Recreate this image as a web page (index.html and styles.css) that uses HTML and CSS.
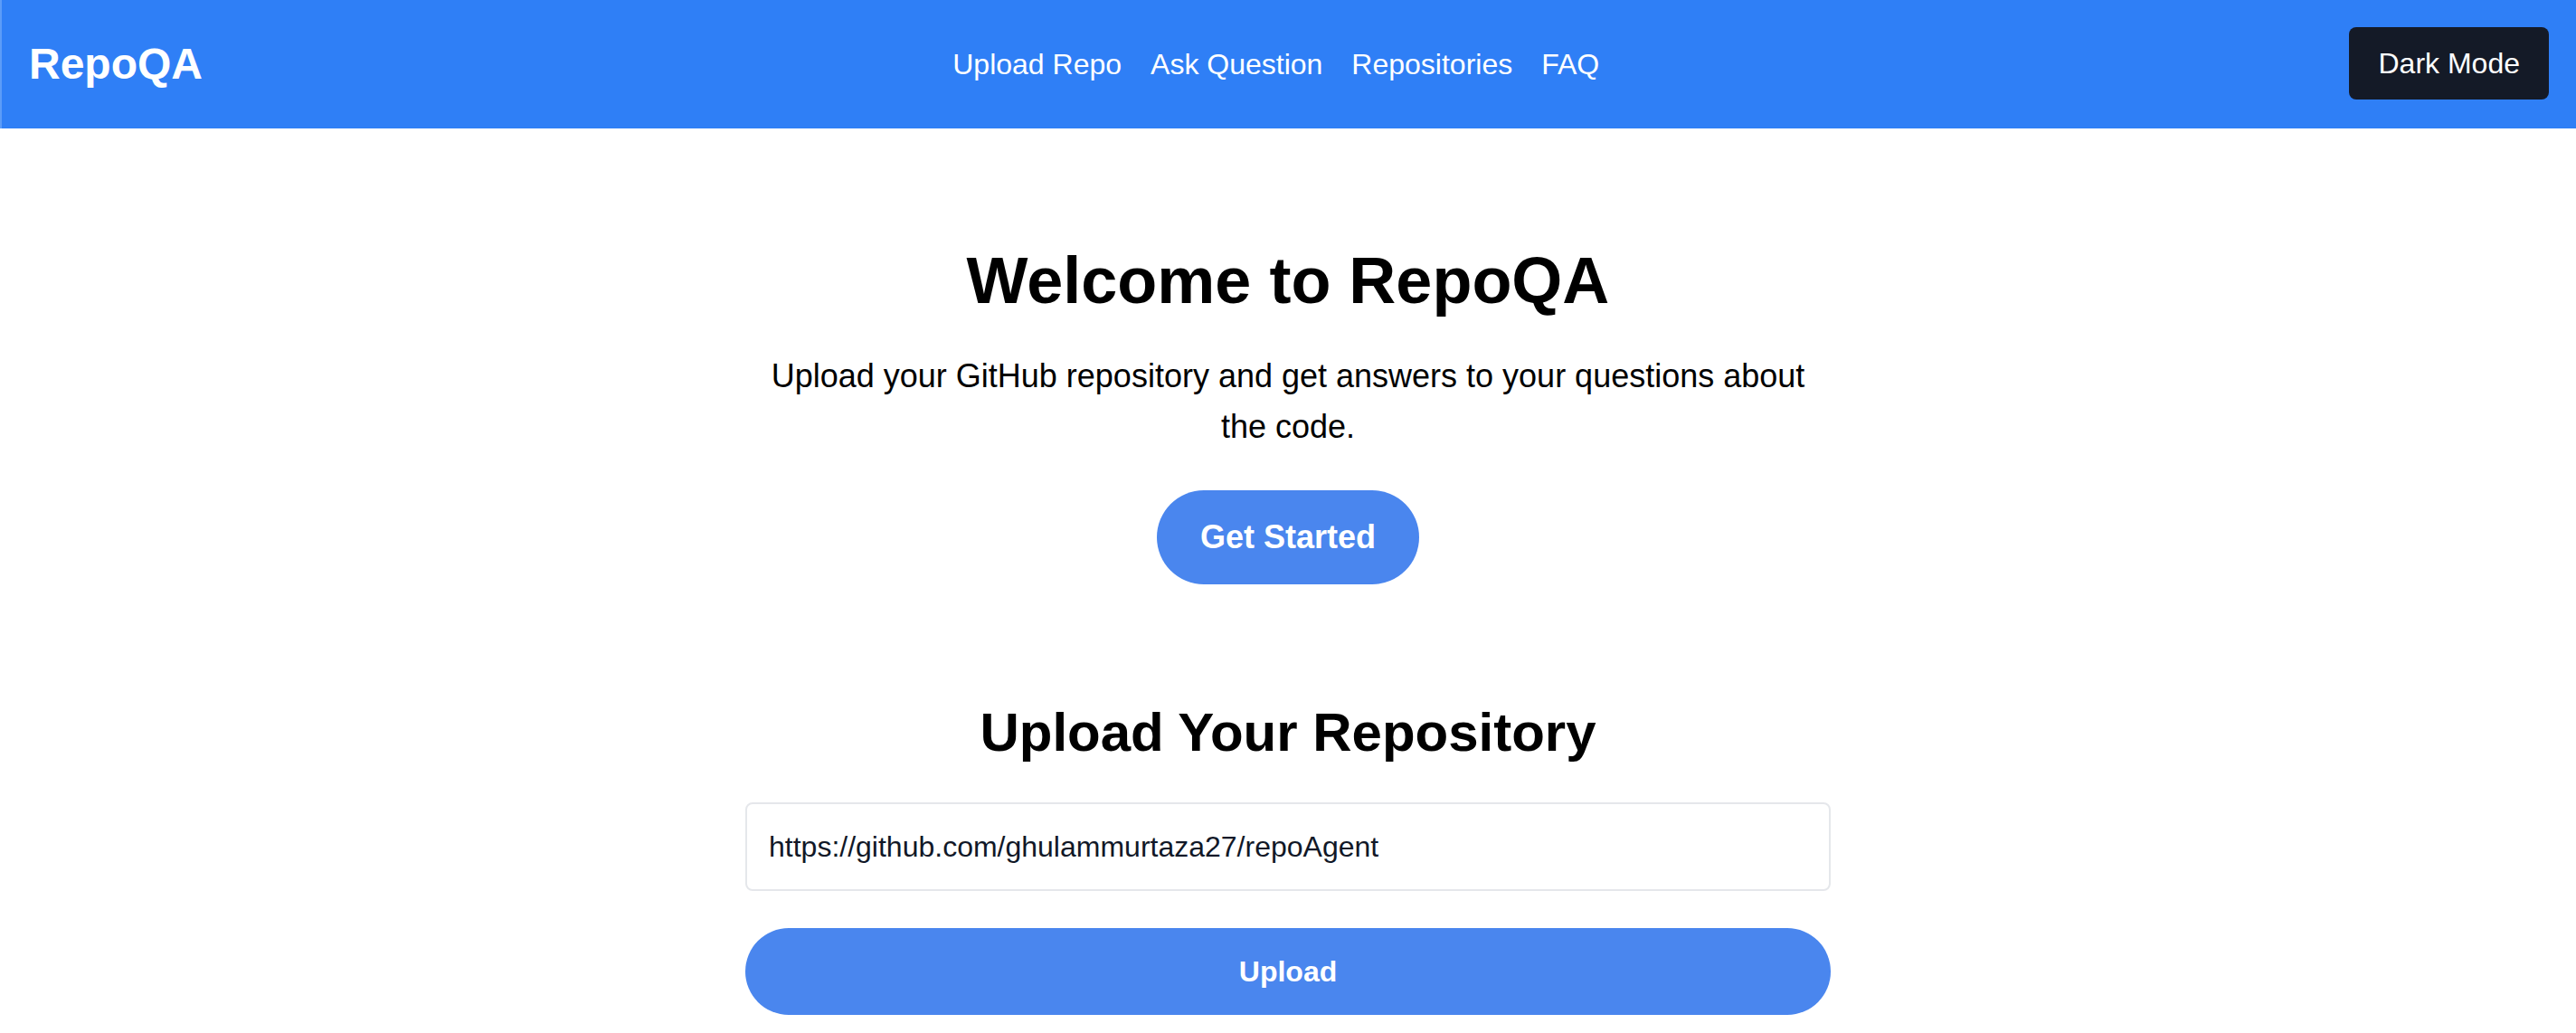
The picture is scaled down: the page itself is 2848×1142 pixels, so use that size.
FILE: index.html
```html
<!DOCTYPE html>
<html lang="en">
<head>
<meta charset="utf-8">
<title>RepoQA</title>
<link rel="stylesheet" href="styles.css">
</head>
<body>
<header class="topbar">
  <div class="logo">RepoQA</div>
  <nav class="nav">
    <a href="#" class="nav-link">Upload Repo</a>
    <a href="#" class="nav-link">Ask Question</a>
    <a href="#" class="nav-link">Repositories</a>
    <a href="#" class="nav-link">FAQ</a>
  </nav>
  <button class="dark-btn">Dark Mode</button>
</header>
<main class="main">
  <section class="hero">
    <h1 class="hero-title">Welcome to RepoQA</h1>
    <p class="hero-text">Upload your GitHub repository and get answers to your questions about the code.</p>
    <button class="cta">Get Started</button>
  </section>
  <section class="upload">
    <h2 class="upload-title">Upload Your Repository</h2>
    <input class="url-input" type="text" value="https://github.com/ghulammurtaza27/repoAgent">
    <button class="upload-btn">Upload</button>
  </section>
</main>
</body>
</html>
```

FILE: styles.css
```css
* { box-sizing: border-box; }
html, body { margin: 0; padding: 0; background: #ffffff; }
body { font-family: "Liberation Sans", Arial, Helvetica, sans-serif; color: #000; }

.topbar {
  height: 142px;
  background: #2f7ff6;
  border-left: 2px solid #5c9cf8;
  padding: 0 30px;
  display: flex;
  align-items: center;
  justify-content: space-between;
}
.logo {
  color: #fff;
  font-weight: 700;
  font-size: 48px;
  line-height: 64px;
}
.nav { display: flex; gap: 32px; }
.nav-link {
  color: #fff;
  text-decoration: none;
  font-size: 32px;
  line-height: 48px;
}
.dark-btn {
  background: #141a27;
  color: #fff;
  border: 0;
  border-radius: 8px;
  font-family: inherit;
  font-size: 32px;
  line-height: 48px;
  padding: 16px 32px;
  height: 80px;
  margin-top: -2px;
  white-space: nowrap;
}

.main {
  display: flex;
  flex-direction: column;
  align-items: center;
  padding-top: 128px;
}
.hero {
  display: flex;
  flex-direction: column;
  align-items: center;
  text-align: center;
}
.hero-title {
  margin: 0 0 38px;
  font-size: 72px;
  line-height: 80px;
  font-weight: 700;
}
.hero-text {
  margin: 0 0 42px;
  max-width: 1152px;
  font-size: 36px;
  line-height: 56px;
  color: #000;
}
.cta {
  background: #4a86ee;
  color: #fff;
  border: 0;
  border-radius: 9999px;
  font-family: inherit;
  font-weight: 700;
  font-size: 36px;
  line-height: 56px;
  padding: 24px 48px;
  height: 104px;
  white-space: nowrap;
}
.upload {
  margin-top: 128px;
  width: 1200px;
  display: flex;
  flex-direction: column;
  align-items: center;
}
.upload-title {
  margin: 0 0 41px;
  font-size: 60px;
  line-height: 72px;
  font-weight: 700;
}
.url-input {
  width: 100%;
  height: 98px;
  border: 2px solid #e5e7eb;
  border-radius: 8px;
  padding: 0 24px;
  font-family: inherit;
  font-size: 32px;
  color: #111827;
  outline: none;
}
.upload-btn {
  margin-top: 41px;
  width: 100%;
  height: 96px;
  background: #4a86ee;
  color: #fff;
  border: 0;
  border-radius: 9999px;
  font-family: inherit;
  font-weight: 700;
  font-size: 32px;
  line-height: 48px;
}
```
